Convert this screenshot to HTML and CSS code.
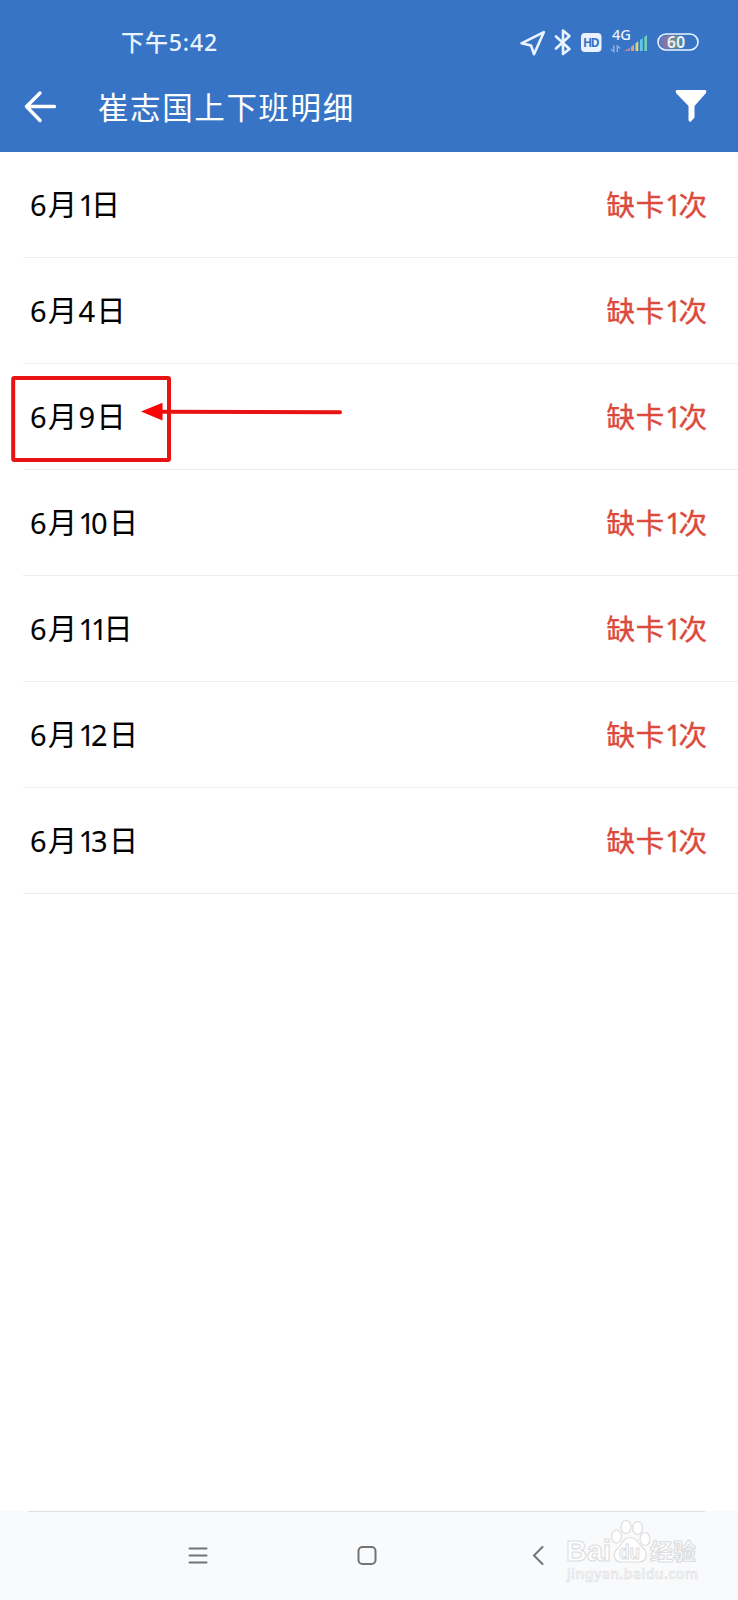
FILE: index.html
```html
<!DOCTYPE html>
<html lang="zh-CN">
<head>
  <meta charset="UTF-8" />
  <title>上下班明细</title>
  <link rel="stylesheet" href="styles.css">
</head>
<body>
  <!-- 顶部 -->
  <header class="header">
    <div class="status-bar">
      <span class="time">下午5:42</span>
      <svg class="status-icons" width="190" height="36" viewBox="510 24 190 36">
        <g fill="none" stroke="#eaf3ff" stroke-width="2.6" stroke-linejoin="round" stroke-linecap="round">
          <path d="M521.5 43.3 543.8 32.2 534 54.2 531 45.5Z" />
          <path d="M556 36.5 569.5 49 563 54V30.5L569.5 36 556 48.5" />
        </g>
        <rect x="581" y="33" width="20.500" height="19" rx="4" fill="#eaf3ff" />
        <text class="hd" x="583" y="46.500" textLength="16.500">HD</text>
        <text class="net" x="612" y="40" textLength="19" lengthAdjust="spacingAndGlyphs">4G</text>
        <g fill="none" stroke="#8fb1e2" stroke-width="1.500">
          <path d="M613.800 45.500V51.500L610.800 49M617.300 52V46L620.300 48.500" />
        </g>
        <path d="M624 51 630 47.500V51Z" fill="#c57c9a" />
        <path d="M631 47V51H634V44.500Z" fill="#d9a27d" />
        <path d="M635.500 43.500 638.300 41V51H635.500Z" fill="#d9d77c" />
        <path d="M640 40 642.700 38V51H640Z" fill="#62c7ec" />
        <path d="M644.300 37 647 35V51H644.300Z" fill="#6ed1b5" />
        <defs>
          <linearGradient id="battery">
            <stop offset="0" stop-color="#6f75c0" />
            <stop offset=".3" stop-color="#8c7898" />
            <stop offset=".6" stop-color="#6f9088" />
            <stop offset="1" stop-color="#3874c6" />
          </linearGradient>
        </defs>
        <rect x="660" y="35.500" width="27" height="13" rx="6.500" fill="url(#battery)" />
        <rect x="658" y="34" width="40" height="16" rx="8" fill="none" stroke="#eaf3ff" stroke-width="1.600" />
        <text class="level" x="667" y="47.500" textLength="18">60</text>
      </svg>
    </div>
    <div class="title-bar">
      <svg class="back" width="36" height="36" viewBox="0 0 36 36">
        <path d="M18 5 4.500 18.500 18 32.500M4.500 18.500H32.500" />
      </svg>
      <h1 class="title">崔志国上下班明细</h1>
      <svg class="filter" width="32" height="34" viewBox="0 0 32 34">
        <path d="M1.500 1H30.500Q32 1.500 31 4L19.500 17V28.500L15.500 33Q13.500 32.500 13.500 31V17L1 4Q0 1.500 1.500 1Z" />
      </svg>
    </div>
  </header>

  <!-- 缺卡记录 -->
  <ul class="list">
    <li class="row"><span class="date">6月<i>1</i>日</span><span class="missing">缺卡<i>1</i>次</span></li>
    <li class="row"><span class="date">6月4日</span><span class="missing">缺卡<i>1</i>次</span></li>
    <li class="row"><span class="date">6月9日</span><span class="missing">缺卡<i>1</i>次</span>
      <svg class="mark" width="350" height="100" viewBox="0 370 350 100">
        <rect x="13.200" y="378" width="155.800" height="82" rx="1" />
        <path d="M160 411.800 340 412.300" />
        <path class="mark-head" d="M141 411.500 162.500 402.800V420.500Z" />
      </svg>
    </li>
    <li class="row"><span class="date">6月<i>1</i>0日</span><span class="missing">缺卡<i>1</i>次</span></li>
    <li class="row"><span class="date">6月<i>11</i>日</span><span class="missing">缺卡<i>1</i>次</span></li>
    <li class="row"><span class="date">6月<i>1</i>2日</span><span class="missing">缺卡<i>1</i>次</span></li>
    <li class="row"><span class="date">6月<i>1</i>3日</span><span class="missing">缺卡<i>1</i>次</span></li>
  </ul>

  <!-- 底部导航 -->
  <nav class="nav">
    <svg width="20" height="20" viewBox="0 0 20 20"><path d="M1.500 2.500H18.500M1.500 9.500H18.500M1.500 16.500H18.500" /></svg>
    <svg width="20" height="20" viewBox="0 0 20 20"><rect x="1.500" y="1" width="17" height="17" rx="4" /></svg>
    <svg width="20" height="20" viewBox="0 0 20 20"><path d="M16.500 1 8 9.500 16.500 18" /></svg>
    <svg class="watermark" width="140" height="70" viewBox="562 1515 140 70">
      <ellipse cx="616.500" cy="1536.500" rx="5" ry="6.500" />
      <ellipse cx="626" cy="1527" rx="5" ry="6.500" />
      <ellipse cx="637.500" cy="1528" rx="5" ry="6.500" />
      <ellipse cx="645" cy="1539" rx="5" ry="6.500" />
      <path d="M630 1537.500C637 1537.500 638 1544 643 1548C649 1554 646 1562 639 1562H621C614 1562 612 1554 618 1548C623 1544 623 1537.500 630 1537.500Z" />
      <text class="brand" x="566" y="1561" textLength="45" lengthAdjust="spacingAndGlyphs">Bai</text>
      <text class="du" x="619" y="1559" textLength="21" lengthAdjust="spacingAndGlyphs">du</text>
      <text class="brand-cn" x="650" y="1560" textLength="46">经验</text>
      <text class="url" x="567" y="1579" textLength="131">jingyan.baidu.com</text>
    </svg>
  </nav>
</body>
</html>
```
FILE: styles.css
```css
body {
  font-family: 'Noto Sans', 'Noto Sans CJK SC', sans-serif;
  background: #fff;
  color: #000;
  margin: 0;
  height: 1600px;
  display: flex;
  flex-direction: column;
  overflow: hidden;
}

.header {
  height: 152px;
  background: #3874c6;
  color: #fff;
}

.status-bar {
  display: flex;
  justify-content: space-between;
  align-items: center;
  height: 36px;
  padding: 24px 38px 0 121px;
}

.time {
  font-size: 23px;
  font-weight: 500;
  line-height: 36px;
  letter-spacing: 0.9px;
  color: #eaf3ff;
}

.status-icons text {
  fill: #eaf3ff;
}

.status-icons .hd {
  font-size: 12px;
  font-weight: bold;
  fill: #3874c6;
}

.status-icons .net {
  font-size: 14px;
  font-weight: 500;
}

.status-icons .level {
  font-size: 15.5px;
  font-weight: 600;
}

.title-bar {
  display: flex;
  align-items: center;
  height: 92px;
  padding: 0 31px 0 22px;
}

.back {
  fill: none;
  stroke: #fff;
  stroke-width: 3.4;
  stroke-linecap: round;
  stroke-linejoin: round;
}

.title {
  flex: 1;
  margin: 2px 0 0 40px;
  font-size: 30.5px;
  font-weight: 400;
  line-height: 40px;
  letter-spacing: 1.6px;
}

.filter {
  fill: #fff;
}

.list {
  flex: 1;
  margin: 0;
  padding: 0 0 0 23px;
  list-style: none;
}

.row {
  position: relative;
  display: flex;
  justify-content: space-between;
  align-items: center;
  height: 106px;
  padding: 1px 30px 0 7px;
  box-sizing: border-box;
  border-bottom: 1px solid #ececec;
  font-size: 29px;
  line-height: 42px;
}

.date {
  letter-spacing: 1.4px;
  -webkit-text-stroke: 0.1px;
}

/* 数字 1 收窄 */
.row i {
  font-style: normal;
  letter-spacing: -4px;
}

.missing {
  color: #dc4a3d;
  font-size: 28.5px;
  letter-spacing: 0.9px;
  -webkit-text-stroke: 0.4px;
}

.missing i {
  letter-spacing: -3px;
}

.mark {
  position: absolute;
  top: 6px;
  left: -23px;
  fill: none;
  stroke: #e81414;
  stroke-width: 4;
  stroke-linecap: round;
}

.mark-head {
  fill: #fb0505;
  stroke: none;
}

.nav {
  position: relative;
  display: flex;
  align-items: center;
  gap: 149px;
  height: 89px;
  padding-left: 188px;
  background: #f9fafc;
  fill: none;
  stroke: #737373;
  stroke-width: 2;
  stroke-linecap: round;
}

.nav::before {
  content: "";
  position: absolute;
  top: 0;
  left: 28px;
  width: 677px;
  height: 1px;
  background: #dedfe1;
}

.watermark {
  position: absolute;
  top: 4px;
  left: 562px;
  fill: #fff;
  stroke: #dddee0;
  stroke-width: 1.2;
}

.watermark text {
  font-family: 'Liberation Sans', 'Noto Sans CJK SC', sans-serif;
  font-weight: bold;
}

.brand {
  font-size: 30px;
}

.du {
  font-size: 20px;
}

.brand-cn {
  font-size: 23px;
}

.watermark .url {
  font-family: 'Noto Sans', sans-serif;
  font-size: 14px;
  font-weight: 500;
  stroke-width: 0.7;
}
```
